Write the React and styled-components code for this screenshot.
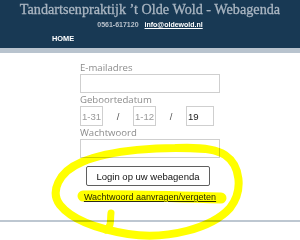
import React from "react"
import styled, { createGlobalStyle } from "styled-components"

const Global = createGlobalStyle`
  html, body {
    margin: 0;
    padding: 0;
    background: #fff;
  }
  body {
    font-family: "Liberation Sans", Arial, sans-serif;
  }
`

const Page = styled.div`
  position: relative;
  width: 300px;
  height: 240px;
  overflow: hidden;
`

const Header = styled.header`
  background: #183954;
  border-bottom: 5px solid #b8c3ce;
  height: 48px;
  display: flex;
  flex-direction: column;
  align-items: center;
`

const Title = styled.h1`
  margin: 2px 0 0 0;
  font-family: "Liberation Serif", "Times New Roman", serif;
  font-weight: normal;
  font-size: 14.2px;
  line-height: 15px;
  color: #a9b5c1;
  -webkit-text-stroke: 0.3px #a9b5c1;
  white-space: nowrap;
`

const Contact = styled.div`
  display: flex;
  gap: 6px;
  margin-top: 4px;
  font-size: 7px;
  line-height: 8px;
  font-weight: bold;
  color: #b7c0ca;

  a {
    color: #fff;
    text-decoration: underline;
  }
`

const Nav = styled.nav`
  align-self: stretch;
  padding: 6px 0 0 52px;
  font-size: 7.4px;
  line-height: 8px;
  font-weight: bold;
  color: #fff;
`

const Form = styled.form`
  width: 140px;
  margin: 9px 0 0 80px;
  display: flex;
  flex-direction: column;
`

const Label = styled.label`
  font-family: "Open Sans", "Noto Sans", sans-serif;
  font-size: 9.6px;
  line-height: 12px;
  color: #8c8c8c;
  margin-top: ${p => p.$first ? "0" : "1px"};
`

const Input = styled.input`
  box-sizing: border-box;
  width: ${p => p.$w || "140px"};
  height: ${p => p.$h || "19px"};
  margin: 0;
  padding: 0 0 0 1px;
  border: 1px solid #cfcfcf;
  background: #fff;
  font-family: "Liberation Sans", Arial, sans-serif;
  font-size: 9.6px;
  color: #222;
  outline: none;

  &::placeholder {
    color: #9a9a9a;
  }
`

const DateRow = styled.div`
  display: flex;
  align-items: center;
`

const Sep = styled.span`
  width: 30px;
  text-align: center;
  font-size: 9.6px;
  color: #555;
`

const Actions = styled.div`
  display: flex;
  flex-direction: column;
  align-items: center;
  margin-top: 8px;
`

const Button = styled.button`
  box-sizing: border-box;
  width: 124px;
  height: 20px;
  margin-right: 4px;
  padding: 0;
  border: 1px solid #5f5f5f;
  border-radius: 2px;
  background: #fff;
  font-family: "Liberation Sans", Arial, sans-serif;
  font-size: 9.5px;
  color: #111;
`

const Forgot = styled.a`
  margin-top: 5px;
  font-size: 9px;
  line-height: 12px;
  color: #2a2a2a;
  text-decoration: underline;
  white-space: nowrap;
`

const Rule = styled.hr`
  margin: 17px 0 0 0;
  border: 0;
  border-top: 2px solid #bdc7d1;
`

const Scribble = styled.svg`
  position: absolute;
  left: 0;
  top: 0;
  pointer-events: none;
  mix-blend-mode: multiply;
`

export default function App() {
  return (
    <Page>
      <Global />
      <Header>
        <Title>Tandartsenpraktijk ’t Olde Wold - Webagenda</Title>
        <Contact>
          <span>0561-617120</span>
          <a href="#">info@oldewold.nl</a>
        </Contact>
        <Nav>HOME</Nav>
      </Header>
      <Form onSubmit={e => e.preventDefault()}>
        <Label $first>E-mailadres</Label>
        <Input type="text" />
        <Label>Geboortedatum</Label>
        <DateRow>
          <Input $w="23px" $h="20px" placeholder="1-31" />
          <Sep>/</Sep>
          <Input $w="23px" $h="20px" placeholder="1-12" />
          <Sep>/</Sep>
          <Input $w="28px" $h="20px" defaultValue="19" />
        </DateRow>
        <Label>Wachtwoord</Label>
        <Input type="password" />
        <Actions>
          <Button type="submit">Login op uw webagenda</Button>
          <Forgot href="#">Wachtwoord aanvragen/vergeten</Forgot>
        </Actions>
      </Form>
      <Rule />
      <Scribble width="300" height="240" viewBox="0 0 300 240">
        <g fill="none" stroke="#ffff00" strokeLinecap="round" strokeLinejoin="round">
          <path strokeWidth="8" d="M 205 149 C 160 146 110 150 82 162 C 58 172 50 192 60 205 C 72 220 98 229 128 234 C 168 240 212 228 230 208 C 244 190 240 165 225 155 C 214 148 196 147 176 148" />
          <path strokeWidth="7" d="M 111 213 C 110 220 112 226 106 230" />
          <path strokeWidth="11" d="M 83 196 C 130 195 180 197 221 198" />
        </g>
      </Scribble>
    </Page>
  )
}
